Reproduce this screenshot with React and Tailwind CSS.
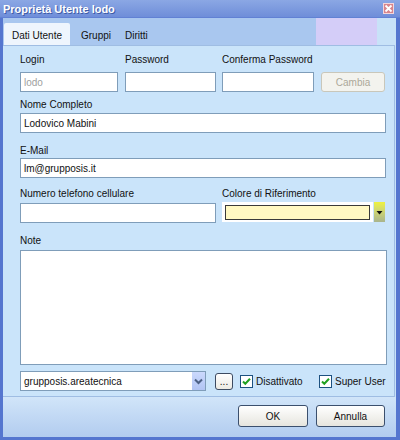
export default function App() {
  const inputCls =
    "h-[20px] bg-white border border-[#7f9db9] flex items-center pl-[3px] text-[10px] leading-[13px]";
  const Check = ({ label, w }) => (
    <div className={`flex items-center ${w}`}>
      <div className="w-[13px] h-[13px] bg-white border border-[#1c5180] flex items-center justify-center">
        <svg width="11" height="11" viewBox="0 0 11 11">
          <path d="M2 5.5 L4.3 7.8 L9 2.8" fill="none" stroke="#21a121" strokeWidth="2" />
        </svg>
      </div>
      <span className="ml-[3px]">{label}</span>
    </div>
  );
  const Btn = ({ children, w }) => (
    <div
      className={`${w} h-[22px] rounded-[3px] border border-[#3b4f6d] bg-linear-to-b from-[#ffffff] to-[#e6e5de] flex items-center justify-center text-[10px]`}
    >
      {children}
    </div>
  );
  return (
    <div className="w-[400px] h-[440px] flex flex-col font-['Liberation_Sans',Arial,sans-serif] text-[10px] leading-[13px] text-[#111]">
      {/* title bar */}
      <div className="h-[18px] flex items-center justify-between pl-[3px] pr-[6px] bg-linear-to-b from-[#8ba7e4] to-[#6f8ed9] border-b border-[#6181d4]">
        <span className="text-white font-bold text-[11px] leading-[14px] [text-shadow:1px_1px_0_#3d5aa6]">
          Proprietà Utente lodo
        </span>
        <div className="w-[11px] h-[11px] bg-[#d7858c] border border-[#f3d6da] flex items-center justify-center">
          <svg width="9" height="9" viewBox="0 0 9 9">
            <path d="M1.5 1.5 L7.5 7.5 M7.5 1.5 L1.5 7.5" stroke="#ffffff" strokeWidth="1.8" />
          </svg>
        </div>
      </div>

      {/* body */}
      <div className="flex-1 flex flex-col bg-[#c8e2f8] border-l-[3px] border-r-[4px] border-b-[3px] border-[#5576cf]">
        {/* tab band */}
        <div className="h-[27px] flex shrink-0">
          <div className="flex-1 flex items-end bg-[#a9c7ef]">
            <div className="ml-[1px] w-[66px] h-[22px] bg-[#eef5fd] rounded-t-[2px] pl-[8px] pt-[6px]">
              Dati Utente
            </div>
            <div className="ml-[11px] h-[22px] pt-[6px]">Gruppi</div>
            <div className="ml-[14px] h-[22px] pt-[6px]">Diritti</div>
          </div>
          <div className="w-[61px] bg-[#d4cdf8]" />
          <div className="w-[19px]" />
        </div>

        {/* panel */}
        <div className="h-[352px] shrink-0 mr-[1px] border-t border-r border-b border-[#9fbde3] bg-[#cae4fa] pl-[17px] flex flex-col">
          {/* row 1 */}
          <div className="flex mt-[7px]">
            <div className="w-[98px] flex flex-col">
              <span>Login</span>
              <div className={`${inputCls} mt-[6px] text-[#a0a0a0]`}>lodo</div>
            </div>
            <div className="ml-[7px] w-[91px] flex flex-col">
              <span>Password</span>
              <div className={`${inputCls} mt-[6px]`} />
            </div>
            <div className="ml-[6px] w-[92px] flex flex-col">
              <span>Conferma Password</span>
              <div className={`${inputCls} mt-[6px]`} />
            </div>
            <div className="ml-[7px] w-[64px] flex flex-col">
              <span>&nbsp;</span>
              <div className="mt-[6px] h-[20px] rounded-[3px] border border-[#c9c7ba] bg-[#f3f3ee] text-[#aca899] flex items-center justify-center">
                Cambia
              </div>
            </div>
          </div>

          {/* nome */}
          <span className="mt-[6px]">Nome Completo</span>
          <div className={`${inputCls} mt-[2px] w-[366px]`}>Lodovico Mabini</div>

          {/* email */}
          <span className="mt-[11px]">E-Mail</span>
          <div className={`${inputCls} mt-[1px] w-[366px]`}>lm@grupposis.it</div>

          {/* numero / colore */}
          <div className="flex mt-[9px]">
            <div className="w-[196px] flex flex-col">
              <span>Numero telefono cellulare</span>
              <div className={`${inputCls} mt-[3px]`} />
            </div>
            <div className="ml-[6px] flex flex-col">
              <span>Colore di Riferimento</span>
              <div className="mt-[2px] flex h-[20px]">
                <div className="w-[151px] h-[20px] bg-white p-[3px] pb-[2px]">
                  <div className="w-full h-full bg-[#fff8c2] border border-[#3a3a3a]" />
                </div>
                <div className="ml-[1px] w-[11px] h-[20px] bg-linear-to-b from-[#eef23c] to-[#a9b48c] flex items-center justify-center">
                  <svg width="7" height="5" viewBox="0 0 7 5">
                    <path d="M0.5 1 L6.5 1 L3.5 4.5 Z" fill="#111" />
                  </svg>
                </div>
              </div>
            </div>
          </div>

          {/* note */}
          <span className="mt-[11px]">Note</span>
          <div className="mt-[3px] w-[367px] h-[115px] bg-white border border-[#7f9db9]" />

          {/* bottom row */}
          <div className="mt-[6px] h-[20px] flex items-center">
            <div className="w-[186px] h-[20px] bg-white border border-[#7f9db9] flex items-center">
              <span className="pl-[3px] flex-1">grupposis.areatecnica</span>
              <div className="w-[13px] h-[18px] bg-linear-to-b from-[#cbd9fd] to-[#b1c4f3] flex items-center justify-center">
                <svg width="9" height="7" viewBox="0 0 9 7">
                  <path d="M1 1.5 L4.5 5 L8 1.5" fill="none" stroke="#4d6185" strokeWidth="2" />
                </svg>
              </div>
            </div>
            <div className="ml-[9px] w-[18px] h-[17px] rounded-[3px] border border-[#3d4b61] bg-linear-to-b from-[#ffffff] to-[#eceae2] flex items-end justify-center pb-[2px] leading-[10px]">
              ...
            </div>
            <div className="ml-[7px]" />
            <Check label="Disattivato" w="w-[79px]" />
            <Check label="Super User" w="" />
          </div>
        </div>

        {/* footer */}
        <div className="flex-1 flex justify-end items-start pt-[8px] pr-[11px] gap-[8px] bg-linear-to-b from-[#d1e5f9] to-[#b2ccef]">
          <Btn w="w-[70px]">OK</Btn>
          <Btn w="w-[69px]">Annulla</Btn>
        </div>
      </div>
    </div>
  );
}
